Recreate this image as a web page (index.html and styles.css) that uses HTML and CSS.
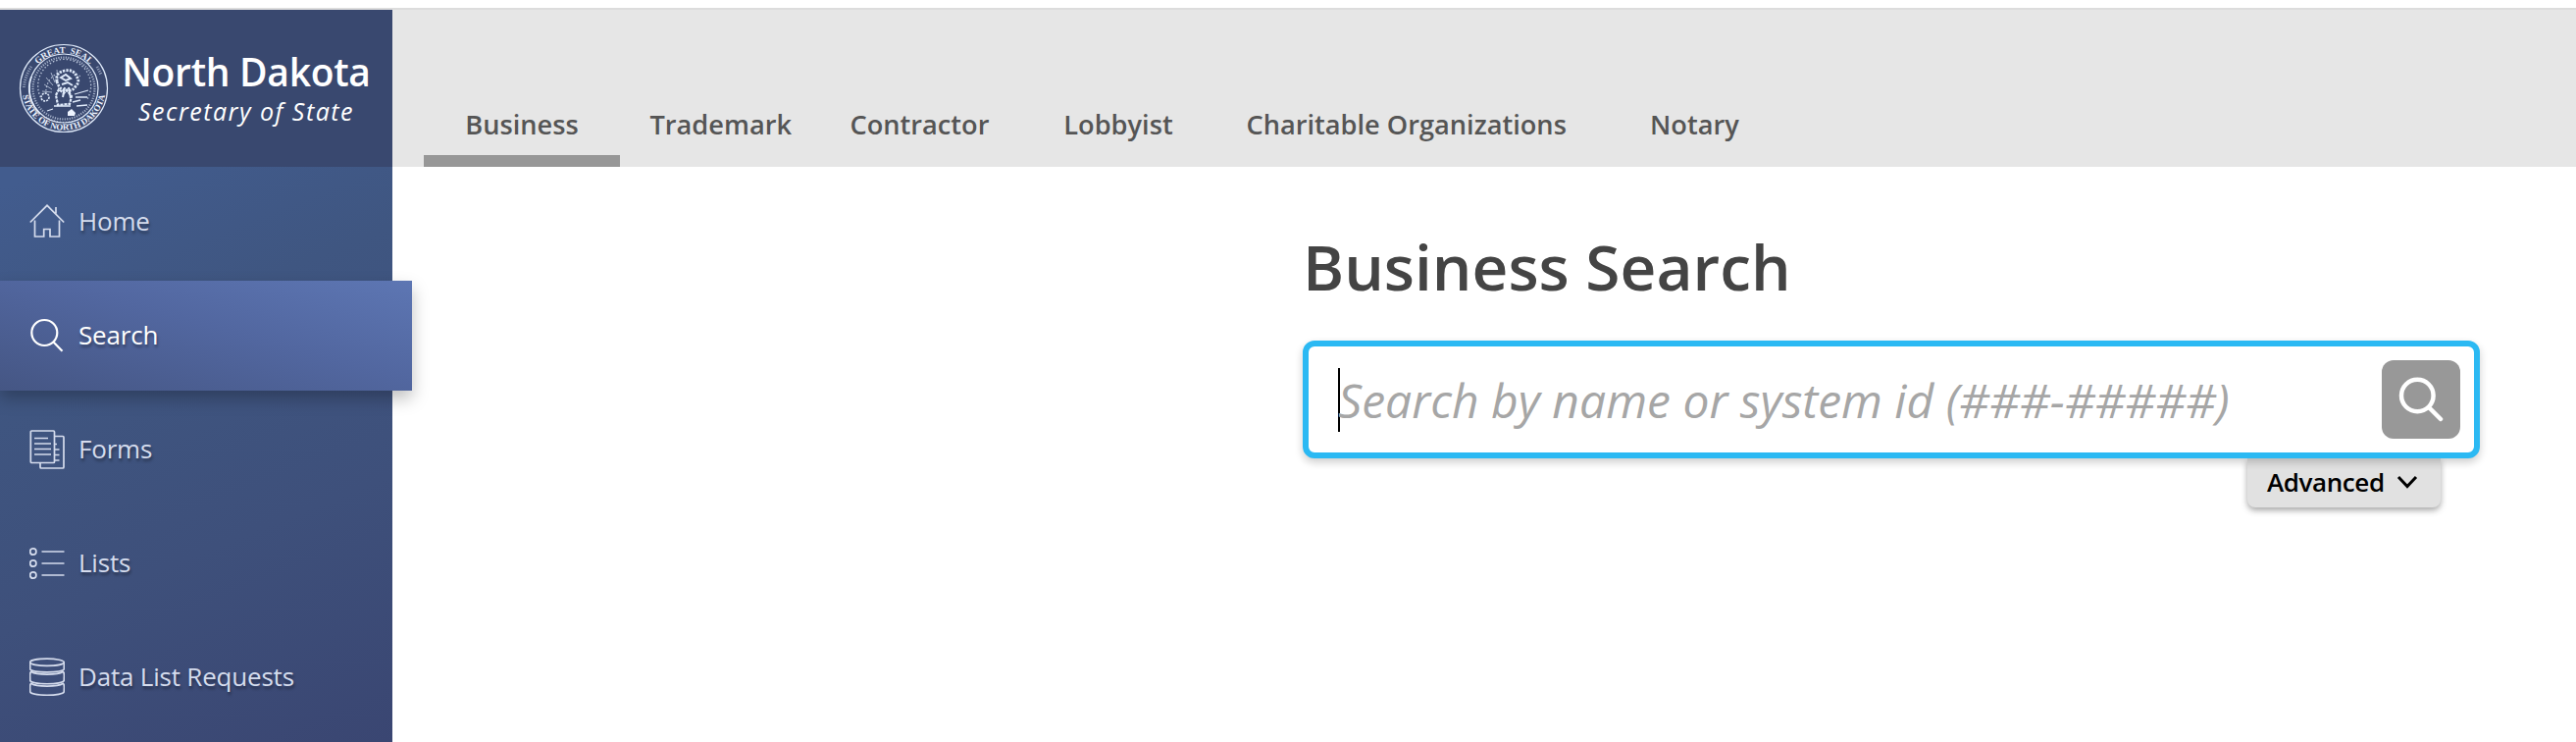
FILE: index.html
```
<!DOCTYPE html>
<html lang="en">
<head>
  <meta charset="UTF-8">
  <title>Business Search - North Dakota Secretary of State</title>
  <link rel="stylesheet" href="styles.css">
</head>
<body>

<div class="app">
  <aside class="sidebar">
    <a class="brand">
      <svg class="seal" viewBox="0 0 92 92" fill="none" stroke="#dfeafa">
        <defs>
          <path id="sealTop" d="M10 46 a36 36 0 0 1 72 0"/>
          <path id="sealBottom" d="M3.500 46 a42.500 42.500 0 0 0 85 0"/>
        </defs>
        <circle cx="46" cy="46" r="44.500" stroke-width="1.200"/>
        <circle cx="46" cy="46" r="35" stroke-width="1.200"/>
        <path d="M13 34 a35 35 0 0 0 9 38" stroke-width="1.800"/>
        <circle cx="46" cy="46" r="31.500" stroke-width="2.200" stroke-dasharray="1.200 1.300" opacity=".65"/>
        <path d="M24 58 A27 27 0 1 1 70 57" stroke-width="1.400" stroke-dasharray="1.500 2" opacity=".75"/>
        <path d="M28 52 A21 21 0 0 1 63 34" stroke-width="1.200" stroke-dasharray="1.500 2" opacity=".75"/>
        <path d="M34 47l-8-5M35 43l-7-8M37 40l-4-10M40 38l-1-11M34 50l-10-1" stroke-width=".8" opacity=".8"/>
        <path d="M39 39q-2-9 8-11q9-2 12 6q4 5-1 10q-3 5-8 4q-8 1-11-9z" stroke-width="2.800" stroke-dasharray="2.200 1.200"/>
        <path d="M43 35l5-3 5 4-5 2zM44 42l6-2 5 3M47 45l-2 10M51 45l2 11" stroke-width="2"/>
        <path d="M38 53l3-6 5 4 3-3 5 6-2 8-12 1z" stroke-width="2.200" stroke-dasharray="3 1"/>
        <path d="M36 64h17M57 52l14-4M58 55h12M59 64l11-1M55 60l8-2M29 69l6-2" stroke-width="1.300"/>
        <circle cx="27" cy="55" r="4" stroke-width="1.600" stroke-dasharray="2 1"/>
        <path d="M50 70l4-3 4 4-1 3h-7z" fill="#eef4ff" stroke="none"/>
        <path d="M28 75 A34 34 0 0 0 65 75" stroke-width="1" stroke-dasharray="1 2"/>
        <g class="seal-text">
          <text><textPath href="#sealTop" startOffset="50%" text-anchor="middle">GREAT&#160; SEAL</textPath></text>
          <text><textPath href="#sealBottom" startOffset="50%" text-anchor="middle">STATE OF NORTH DAKOTA</textPath></text>
        </g>
        <path d="M5.500 45 a40 40 0 0 1 7.500 -21M80 24 l4 8" stroke-width="3" stroke-dasharray="1 1.400" opacity=".6"/>
      </svg>
      <div class="brand-text">
        <div class="brand-name">North Dakota</div>
        <div class="brand-sub">Secretary of State</div>
      </div>
    </a>

    <nav class="side-nav">
      <a class="side-item">
        <svg class="side-icon" viewBox="0 0 36 40">
          <path d="M.8 20.500 18 3.300 35.200 20.500M5.500 18.500V35H14.700V27.500H21V35H30.500V18.500M27 11.500V5"/>
        </svg>
        <span>Home</span>
      </a>
      <a class="side-item active">
        <svg class="side-icon" viewBox="0 0 36 40">
          <circle cx="15.300" cy="17" r="13"/>
          <path d="M24.500 26.500 33.500 35.800"/>
        </svg>
        <span>Search</span>
      </a>
      <a class="side-item">
        <svg class="side-icon" viewBox="0 0 36 40">
          <rect x="1.300" y="1" width="24.200" height="32.500" rx="1"/>
          <path d="M25.500 6.500H34a1 1 0 0 1 1 1V38a1 1 0 0 1-1 1H12a1 1 0 0 1-1-1V33.500M5 8.500H19M5 14H22M5 19.500H22M5 25H22M26 14.500H28M26 20H30.500M26 25.500H30.500M26 31H30.500"/>
        </svg>
        <span>Forms</span>
      </a>
      <a class="side-item">
        <svg class="side-icon" viewBox="0 0 36 40">
          <circle cx="3.800" cy="8" r="3.100"/>
          <circle cx="3.800" cy="20" r="3.100"/>
          <circle cx="3.800" cy="32" r="3.100"/>
          <path d="M12.500 8H35.500M12.500 20H35.500M12.500 32H35.500"/>
        </svg>
        <span>Lists</span>
      </a>
      <a class="side-item">
        <svg class="side-icon" viewBox="0 0 36 40">
          <ellipse cx="18" cy="4.800" rx="17.300" ry="3.600"/>
          <path d="M.7 4.800V11.500C.7 16 35.300 16 35.300 11.500V4.800"/>
          <path d="M2 14C-.2 15.300.7 17 .7 23C.7 28 35.300 28 35.300 23C35.300 17 36.200 15.300 34 14M2 14.500C7 18 29 18 34 14.500"/>
          <path d="M2 26C-.2 27.300.7 29 .7 34.500C.7 39.500 35.300 39.500 35.300 34.500C35.300 29 36.200 27.300 34 26M2 26.500C7 30 29 30 34 26.500"/>
        </svg>
        <span>Data List Requests</span>
      </a>
    </nav>
  </aside>

  <div class="main">
    <nav class="tabs">
      <a class="tab active">Business</a>
      <a class="tab">Trademark</a>
      <a class="tab">Contractor</a>
      <a class="tab">Lobbyist</a>
      <a class="tab">Charitable Organizations</a>
      <a class="tab">Notary</a>
    </nav>

    <main class="content">
      <h1>Business Search</h1>
      <div class="search-box">
        <span class="caret"></span>
        <span class="placeholder">Search by name or system id (###-#####)</span>
        <button class="search-btn" type="button" aria-label="Search">
          <svg viewBox="0 0 46 46">
            <circle cx="19.300" cy="19" r="16.300"/>
            <path d="M31.500 31.500 43 43"/>
          </svg>
        </button>
      </div>
      <button class="advanced" type="button">
        <span>Advanced</span>
        <svg viewBox="0 0 22 14"><path d="M2 2 11 11.500 20 2"/></svg>
      </button>
    </main>
  </div>
</div>

</body>
</html>
```
FILE: styles.css
```
* { box-sizing: border-box; }
body {
  margin: 0;
  padding-top: 8px;
  height: 756px;
  overflow: hidden;
  background: #fff;
  font-family: "Open Sans", "Noto Sans", sans-serif;
}
h1 { margin: 0; }
button { border: 0; padding: 0; font-family: inherit; }

.app {
  display: flex;
  height: 748px;
  border-top: 2px solid #dcdcdc;
}

/* sidebar */
.sidebar {
  flex: none;
  width: 400px;
  background: linear-gradient(158deg, #425c8e 20%, #3f5681 42%, #3e507b 70%, #3a4672 100%);
}
.brand {
  display: flex;
  align-items: center;
  height: 160px;
  padding-left: 19px;
  background: #39486f;
  color: #fff;
}
.seal { flex: none; width: 92px; height: 92px; }
.seal-text {
  fill: #eef4ff;
  stroke: none;
  font: bold 9px "Liberation Serif", serif;
}
.brand-text {
  width: 266px;
  margin-left: 7px;
  padding-top: 2px;
  text-align: center;
}
.brand-name {
  font-size: 39px;
  font-weight: 600;
  line-height: 44px;
  letter-spacing: -.3px;
  white-space: nowrap;
}
.brand-sub {
  font-size: 25px;
  font-style: italic;
  line-height: 36px;
  letter-spacing: 1.5px;
  white-space: nowrap;
}
.side-nav { display: flex; flex-direction: column; gap: 4px; }
.side-item {
  display: flex;
  align-items: center;
  gap: 14px;
  height: 112px;
  padding-left: 30px;
  color: #d5dced;
  font-size: 26px;
  letter-spacing: -.2px;
  text-shadow: 1px 3px 3px rgba(0, 0, 0, .35);
}
.side-item span { padding-bottom: 2px; }
.side-item.active {
  width: 420px;
  color: #fff;
  background: linear-gradient(195deg, #5d76b3 0%, #5267a0 45%, #455684 100%);
  box-shadow: 0 8px 16px rgba(0, 0, 0, .25);
}
.side-icon {
  width: 36px;
  height: 40px;
  fill: none;
  stroke: currentColor;
  stroke-width: 1.7;
}
.active .side-icon { stroke-width: 2.2; }

/* top tabs */
.main { flex: 1; }
.tabs {
  display: flex;
  gap: 2.5px;
  height: 160px;
  padding-left: 32px;
  background: #e6e6e6;
}
.tab {
  display: flex;
  justify-content: center;
  align-items: flex-end;
  min-width: 200px;
  padding: 0 28px 13px;
  border-bottom: 12px solid transparent;
  color: #555;
  font-size: 27.2px;
  font-weight: 600;
  white-space: nowrap;
}
.tab.active { border-color: #979797; }

/* search */
.content {
  display: flex;
  flex-direction: column;
  width: 1200px;
  margin-left: 928px;
  padding-top: 58px;
}
h1 {
  color: #444;
  font-size: 64px;
  font-weight: 600;
  line-height: 88px;
}
.search-box {
  display: flex;
  align-items: center;
  height: 120px;
  margin-top: 31px;
  padding: 0 14px 0 30px;
  border: 6px solid #2bb9f3;
  border-radius: 12px;
  background: #fff;
  box-shadow: 0 4px 8px rgba(0, 0, 0, .2);
  z-index: 1;
}
.caret { width: 2px; height: 65px; background: #000; }
.placeholder {
  flex: 1;
  margin-left: -2px;
  color: #a6a6a6;
  font-size: 48px;
  font-style: italic;
  white-space: nowrap;
}
.search-btn {
  display: flex;
  align-items: center;
  justify-content: center;
  width: 80px;
  height: 80px;
  border-radius: 12px;
  background: #989898;
}
.search-btn svg {
  width: 46px;
  height: 46px;
  fill: none;
  stroke: #fff;
  stroke-width: 4.5;
  stroke-linecap: round;
}
.advanced {
  display: flex;
  align-items: center;
  align-self: flex-end;
  gap: 12px;
  width: 197px;
  height: 50px;
  margin-right: 40px;
  padding: 0 0 2px 20px;
  border-radius: 0 0 8px 8px;
  background: #e1e1e1;
  box-shadow: 0 3px 6px rgba(0, 0, 0, .35);
  color: #000;
  font-size: 26px;
  font-weight: 600;
  letter-spacing: -.4px;
}
.advanced svg {
  width: 22px;
  height: 14px;
  fill: none;
  stroke: #000;
  stroke-width: 3;
}
```
